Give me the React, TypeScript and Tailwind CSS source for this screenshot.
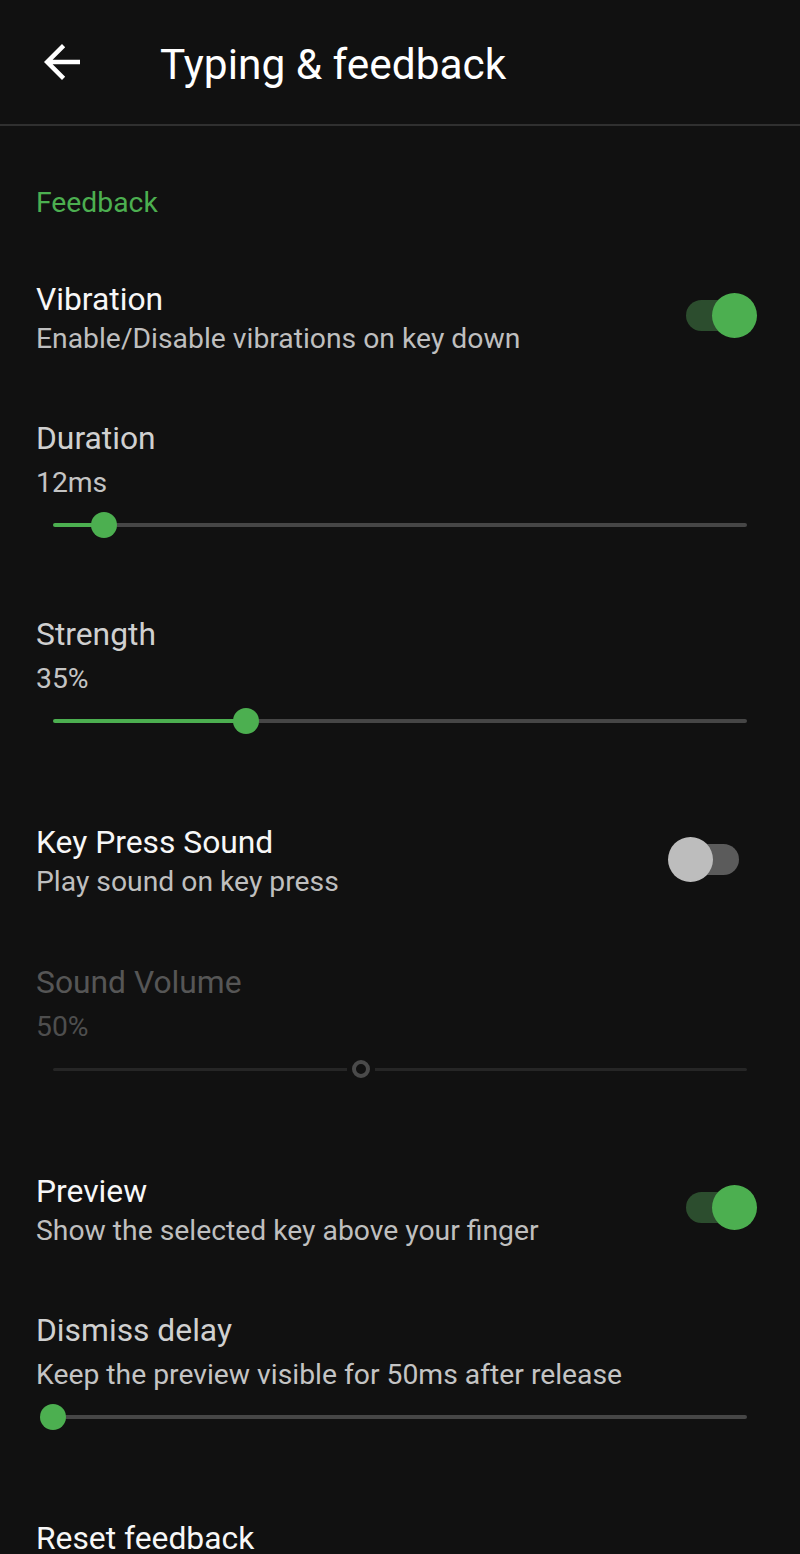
import React from "react";

const font = { fontFamily: "Roboto, 'Noto Sans', sans-serif" };

// Material-like switch: thumb overlaps the track via negative margin
const Switch = ({ on }: { on: boolean }) =>
  on ? (
    <div className="mt-[13px] mr-[7px] flex h-[45px] shrink-0 items-center">
      <div className="h-[31px] w-[64px] rounded-full bg-[#2c4d2e]" />
      <div className="-ml-[38px] h-[45px] w-[45px] rounded-full bg-[#4caf50]" />
    </div>
  ) : (
    <div className="mt-[14px] mr-[25px] flex h-[45px] shrink-0 items-center">
      <div className="z-10 h-[45px] w-[45px] rounded-full bg-[#bdbdbd]" />
      <div className="-ml-[38px] h-[31px] w-[64px] rounded-full bg-[#5b5b5b]" />
    </div>
  );

interface SwitchRowProps {
  title: string;
  subtitle: string;
  on: boolean;
  className?: string;
}

const SwitchRow = ({ title, subtitle, on, className = "" }: SwitchRowProps) => (
  <div className={`flex items-start justify-between ${className}`}>
    <div>
      <div className="text-[31.8px] leading-[38px] text-[#f7f7f7]">{title}</div>
      <div className="text-[28.3px] leading-[42px] text-[#bfbfbf]">{subtitle}</div>
    </div>
    <Switch on={on} />
  </div>
);

const Slider = ({ pct }: { pct: number }) => (
  <div className="mx-[17px] mt-[8px] flex h-[26px] items-center">
    <div className="h-[4px] shrink-0 rounded-l-full bg-[#4caf50]" style={{ width: `${pct}%` }} />
    <div className="z-10 -mx-[13px] h-[26px] w-[26px] shrink-0 rounded-full bg-[#4caf50]" />
    <div className="h-[4px] flex-1 rounded-r-full bg-[#464646]" />
  </div>
);

const DisabledSlider = ({ pct }: { pct: number }) => (
  <div className="mx-[17px] mt-[8px] flex h-[26px] items-center">
    <div
      className="h-[3px] shrink-0 rounded-l-full bg-[#262626]"
      style={{ width: `calc(${pct}% - 14px)` }}
    />
    <div className="mx-[5px] h-[18px] w-[18px] shrink-0 rounded-full border-[4px] border-[#4a4a4a] bg-[#111111]" />
    <div className="h-[3px] flex-1 rounded-r-full bg-[#262626]" />
  </div>
);

interface SliderRowProps {
  title: string;
  value: string;
  pct: number;
  disabled?: boolean;
  className?: string;
}

const SliderRow = ({ title, value, pct, disabled = false, className = "" }: SliderRowProps) => (
  <div className={className}>
    <div className={`text-[31.8px] leading-[38px] ${disabled ? "text-[#565656]" : "text-[#d0d0d0]"}`}>
      {title}
    </div>
    <div
      className={`mt-[5px] text-[28.3px] leading-[42px] ${disabled ? "text-[#4e4e4e]" : "text-[#c4c4c4]"}`}
    >
      {value}
    </div>
    {disabled ? <DisabledSlider pct={pct} /> : <Slider pct={pct} />}
  </div>
);

export default function App() {
  return (
    <div className="min-h-[1554px] w-full overflow-hidden bg-[#111111]" style={font}>
      {/* Top bar */}
      <div className="flex h-[126px] items-center border-b-2 border-[#303030] pt-[5px]">
        <svg viewBox="0 0 24 24" className="ml-[35px] mb-[5px] h-[54px] w-[54px] shrink-0" fill="#ffffff">
          <path d="M20 11H7.83l5.59-5.59L12 4l-8 8 8 8 1.41-1.41L7.83 13H20v-2z" />
        </svg>
        <h1 className="ml-[71px] text-[42.4px] leading-[50px] font-normal text-white">Typing &amp; feedback</h1>
      </div>

      <div className="px-[36px] pt-[59px]">
        <div className="text-[28.3px] leading-[36px] text-[#4caf50]">Feedback</div>

        <SwitchRow
          className="mt-[59px]"
          title="Vibration"
          subtitle="Enable/Disable vibrations on key down"
          on
        />
        <SliderRow className="mt-[59px]" title="Duration" value="12ms" pct={7.35} />
        <SliderRow className="mt-[77px]" title="Strength" value="35%" pct={27.8} />

        <SwitchRow
          className="mt-[89px]"
          title="Key Press Sound"
          subtitle="Play sound on key press"
          on={false}
        />
        <SliderRow className="mt-[60px]" title="Sound Volume" value="50%" pct={44.4} disabled />

        <SwitchRow
          className="mt-[90px]"
          title="Preview"
          subtitle="Show the selected key above your finger"
          on
        />
        <SliderRow
          className="mt-[59px]"
          title="Dismiss delay"
          value="Keep the preview visible for 50ms after release"
          pct={0}
        />

        <div className="mt-[89px] text-[31.8px] leading-[38px] text-[#f7f7f7]">Reset feedback</div>
      </div>
    </div>
  );
}
